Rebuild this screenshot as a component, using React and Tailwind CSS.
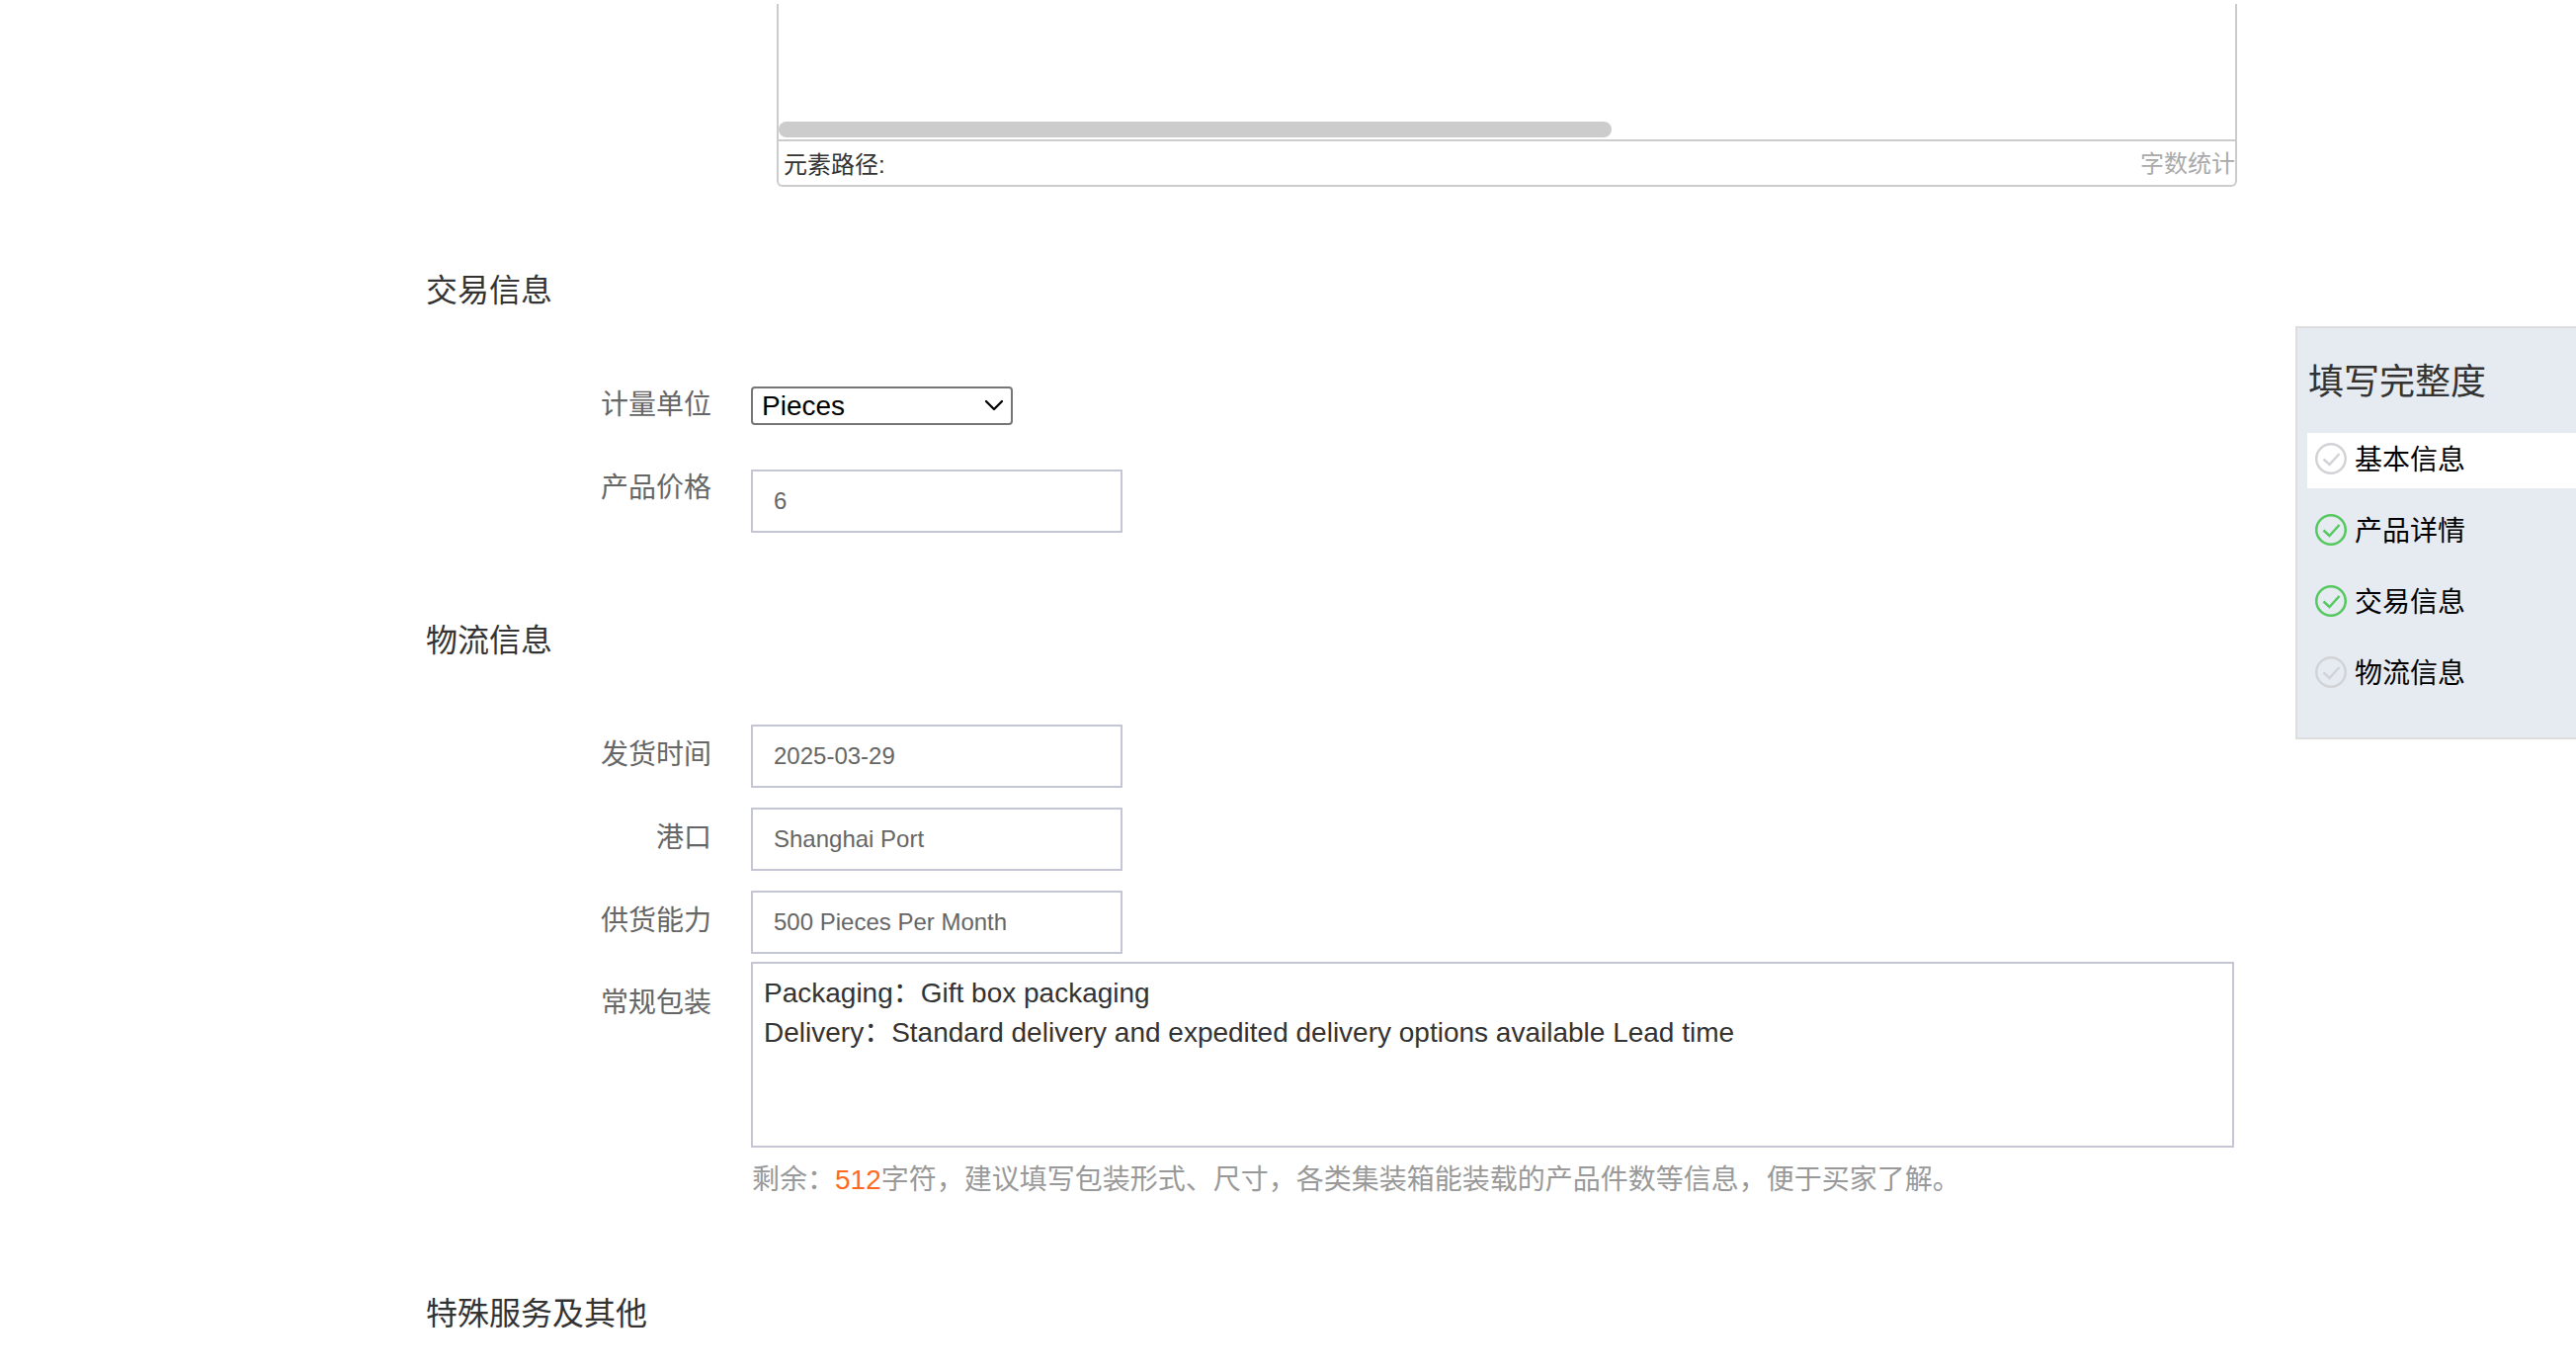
import { ChevronDown } from "lucide-react";

const progress = [
	{ name: "基本信息", done: false, active: true },
	{ name: "产品详情", done: true },
	{ name: "交易信息", done: true },
	{ name: "物流信息", done: false },
];

function CheckIcon({ done }) {
	const color = done ? "#55c95f" : "#d2d3d6";
	return (
		<svg width="32" height="32" viewBox="0 0 32 32" fill="none" className="shrink-0 -translate-y-[2px]">
			<circle cx="16" cy="16" r="14.75" stroke={color} strokeWidth="2.5" />
			<path d="M8.5 16.5l6 5.5L24.5 11" stroke={color} strokeWidth="2.5" />
		</svg>
	);
}

function Row({ label, labelClass, children }) {
	return (
		<div className="flex items-start">
			<label className={`w-[289px] shrink-0 text-right text-[28px] leading-[40px] text-[#666] ${labelClass}`}>
				{label}
			</label>
			<div className="ml-[40px] flex-1">{children}</div>
		</div>
	);
}

function TextInput({ value }) {
	return (
		<input
			type="text"
			readOnly
			value={value}
			className="block w-[376px] h-[64px] border-2 border-[#c4c6d6] bg-white pl-[21px] pr-[20px] text-[24px] text-[#666] outline-none"
		/>
	);
}

function Heading({ children, className }) {
	return <h3 className={`text-[32px] leading-[48px] font-normal text-[#333] ${className}`}>{children}</h3>;
}

export default function App() {
	return (
		<div className="relative h-screen w-full overflow-hidden bg-white font-['Liberation_Sans','Noto_Sans_CJK_SC',sans-serif]">
			<div className="pl-[431px] pr-[343px] pt-[4px]">
				<div className="ml-[355px] h-[185px] border-x-2 border-b-2 border-[#ccc] rounded-b-[6px] flex flex-col">
					<div className="h-[137px] flex items-end pb-[2px]">
						<div className="h-[16px] w-[843px] rounded-[8px] bg-[#ccc]" />
					</div>
					<div className="flex-1 border-t-2 border-[#ccc] flex items-center justify-between pl-[5px] text-[24px] leading-[30px]">
						<span className="text-[#333] mt-[4px]">元素路径:</span>
						<span className="text-[#aaa] mt-[1px]">字数统计</span>
					</div>
				</div>

				<Heading className="mt-[81px]">交易信息</Heading>
				<div className="mt-[73px]">
					<Row label="计量单位" labelClass="-mt-[1px]">
						<div className="relative w-[265px]">
							<select className="block w-full h-[39px] appearance-none rounded-[4px] border-2 border-[#767676] bg-white pl-[9px] text-[28px] leading-[35px] text-black outline-none">
								<option>Pieces</option>
							</select>
							<ChevronDown className="absolute right-[3px] top-[3px] text-black pointer-events-none" size={32} strokeWidth={1.7} />
						</div>
					</Row>
				</div>
				<div className="mt-[45px]">
					<Row label="产品价格" labelClass="-mt-[1px]">
						<TextInput value="6" />
					</Row>
				</div>

				<Heading className="mt-[85px]">物流信息</Heading>
				<div className="mt-[61px] flex flex-col gap-[20px]">
					<Row label="发货时间" labelClass="mt-[11px]">
						<TextInput value="2025-03-29" />
					</Row>
					<Row label="港口" labelClass="mt-[11px]">
						<TextInput value="Shanghai Port" />
					</Row>
					<Row label="供货能力" labelClass="mt-[11px]">
						<TextInput value="500 Pieces Per Month" />
					</Row>
				</div>
				<div className="mt-[8px]">
					<Row label="常规包装" labelClass="mt-[22px]">
						<textarea
							readOnly
							value={"Packaging：Gift box packaging\nDelivery：Standard delivery and expedited delivery options available Lead time"}
							className="block w-[1501px] h-[188px] resize-none border-2 border-[#c4c6d6] bg-white py-[10px] pl-[11px] pr-[10px] text-[28px] leading-[40px] text-[#333] outline-none"
						/>
						<p className="mt-[13px] pl-[1px] text-[28px] leading-[40px] text-[#999]">
							剩余：<span className="text-[#ff6a1f]">512</span>字符，建议填写包装形式、尺寸，各类集装箱能装载的产品件数等信息，便于买家了解。
						</p>
					</Row>
				</div>

				<Heading className="mt-[91px]">特殊服务及其他</Heading>
			</div>

			<div className="absolute right-0 top-[330px] w-[284px] h-[418px] bg-[#e6ebf2] border-2 border-r-0 border-[#ddd] pl-[10px]">
				<h4 className="mt-[31px] pl-[1px] text-[36px] leading-[48px] font-normal text-[#333]">填写完整度</h4>
				<ul className="mt-[27px] flex flex-col gap-[16px]">
					{progress.map((item) => (
						<li
							key={item.name}
							className={`h-[56px] flex items-center gap-[8px] pl-[8px] text-[28px] text-black ${item.active ? "bg-white" : ""}`}
						>
							<CheckIcon done={item.done} />
							{item.name}
						</li>
					))}
				</ul>
			</div>
		</div>
	);
}
